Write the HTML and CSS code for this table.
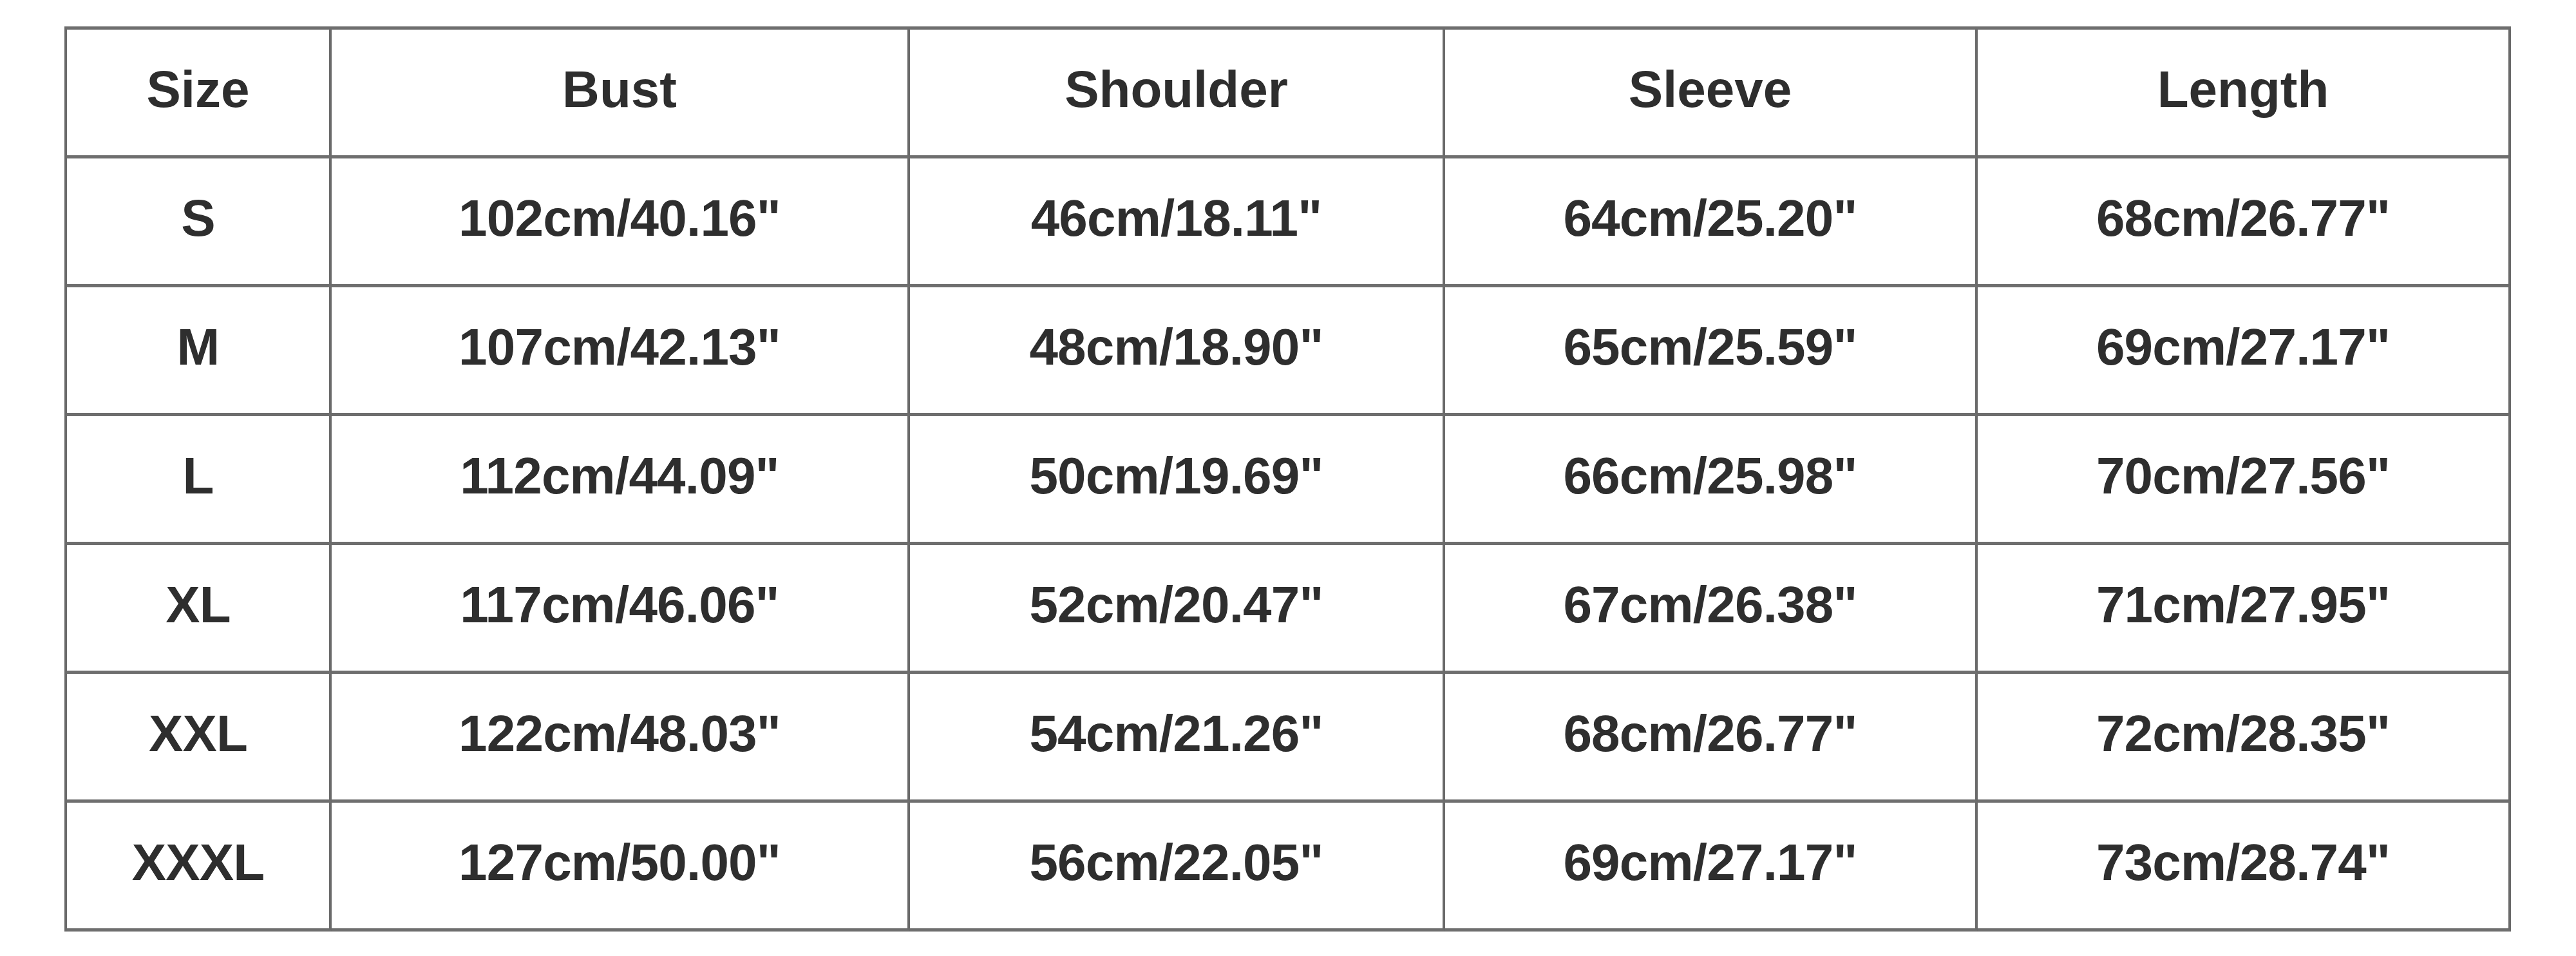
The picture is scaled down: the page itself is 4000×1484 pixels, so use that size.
FILE: index.html
```html
<!DOCTYPE html>
<html lang="en">
<head>
<meta charset="utf-8">
<title>Size Chart</title>
<link rel="stylesheet" href="styles.css">
</head>
<body>
<div class="chart" role="table" aria-label="Size chart">
  <div class="cell head" role="columnheader">Size</div>
  <div class="cell head" role="columnheader">Bust</div>
  <div class="cell head" role="columnheader">Shoulder</div>
  <div class="cell head" role="columnheader">Sleeve</div>
  <div class="cell head" role="columnheader">Length</div>

  <div class="cell" role="cell">S</div>
  <div class="cell" role="cell">102cm/40.16"</div>
  <div class="cell" role="cell">46cm/18.11"</div>
  <div class="cell" role="cell">64cm/25.20"</div>
  <div class="cell" role="cell">68cm/26.77"</div>

  <div class="cell" role="cell">M</div>
  <div class="cell" role="cell">107cm/42.13"</div>
  <div class="cell" role="cell">48cm/18.90"</div>
  <div class="cell" role="cell">65cm/25.59"</div>
  <div class="cell" role="cell">69cm/27.17"</div>

  <div class="cell" role="cell">L</div>
  <div class="cell" role="cell">112cm/44.09"</div>
  <div class="cell" role="cell">50cm/19.69"</div>
  <div class="cell" role="cell">66cm/25.98"</div>
  <div class="cell" role="cell">70cm/27.56"</div>

  <div class="cell" role="cell">XL</div>
  <div class="cell" role="cell">117cm/46.06"</div>
  <div class="cell" role="cell">52cm/20.47"</div>
  <div class="cell" role="cell">67cm/26.38"</div>
  <div class="cell" role="cell">71cm/27.95"</div>

  <div class="cell" role="cell">XXL</div>
  <div class="cell" role="cell">122cm/48.03"</div>
  <div class="cell" role="cell">54cm/21.26"</div>
  <div class="cell" role="cell">68cm/26.77"</div>
  <div class="cell" role="cell">72cm/28.35"</div>

  <div class="cell" role="cell">XXXL</div>
  <div class="cell" role="cell">127cm/50.00"</div>
  <div class="cell" role="cell">56cm/22.05"</div>
  <div class="cell" role="cell">69cm/27.17"</div>
  <div class="cell" role="cell">73cm/28.74"</div>
</div>
</body>
</html>
```

FILE: styles.css
```css
html, body {
  margin: 0;
  padding: 0;
  background: #ffffff;
}

body {
  font-family: "Liberation Sans", Arimo, Arial, Helvetica, sans-serif;
  color: #2e2e2e;
}

.chart {
  display: grid;
  grid-template-columns: 411px 898px 831px 827px 828px;
  grid-auto-rows: 200px;
  width: max-content;
  margin: 41px 0 0 100px;
  border-left: 4px solid #6a6a6a;
  border-top: 5px solid #6e6e6e;
}

.cell {
  box-sizing: border-box;
  display: flex;
  align-items: center;
  justify-content: center;
  padding-bottom: 9px;
  border-right: 4px solid #6a6a6a;
  border-bottom: 5px solid #6e6e6e;
  font-size: 80px;
  font-weight: bold;
  letter-spacing: -0.8px;
  white-space: nowrap;
}

.head {
  letter-spacing: 0;
}
```
